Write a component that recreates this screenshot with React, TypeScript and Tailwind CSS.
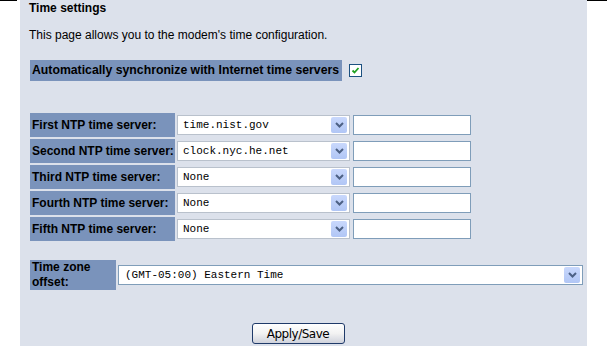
import React from 'react'

const servers = [
  { label: 'First NTP time server:', value: 'time.nist.gov' },
  { label: 'Second NTP time server:', value: 'clock.nyc.he.net' },
  { label: 'Third NTP time server:', value: 'None' },
  { label: 'Fourth NTP time server:', value: 'None' },
  { label: 'Fifth NTP time server:', value: 'None' },
]

const DropButton = () => (
  <div className="w-[16px] h-[16px] rounded-[2px] bg-gradient-to-b from-[#c9d8fc] to-[#b1c6f5] flex items-center justify-center">
    <svg width="9" height="6" viewBox="0 0 9 6">
      <path d="M1 1 L4.5 4.5 L8 1" fill="none" stroke="#4d6185" strokeWidth="2" />
    </svg>
  </div>
)

const FakeSelect = ({ value, className }: { value: string; className: string }) => (
  <div
    className={`h-[20px] bg-white flex items-center justify-between pl-[5px] pr-[2px] ${className}`}
  >
    <span className="text-[11px] text-black font-['Liberation_Mono',monospace] leading-none">
      {value}
    </span>
    <DropButton />
  </div>
)

export default function App() {
  return (
    <div className="w-[607px] h-[346px] bg-white flex font-['Liberation_Sans',Arial,sans-serif] text-black overflow-hidden">
      <div className="w-[20px] shrink-0">
        <div className="h-[1px] w-[17px] bg-black" />
      </div>

      <div className="w-[567px] shrink-0 bg-[#dce1eb] pl-[9px] pt-[1px] flex flex-col">
        <div className="text-[12px] font-bold leading-[14px]">Time settings</div>
        <div className="text-[12px] leading-[14px] mt-[13px]">
          This page allows you to the modem's time configuration.
        </div>

        <div className="flex items-center mt-[18px] pl-[1px]">
          <div className="h-[21px] w-[312px] bg-[#7a93bb] flex items-center pl-[2px] text-[12.25px] font-bold">
            Automatically synchronize with Internet time servers
          </div>
          <div className="ml-[7px] w-[13px] h-[13px] border border-[#1c5180] bg-white flex items-center justify-center">
            <svg width="9" height="9" viewBox="0 0 9 9">
              <path d="M1.5 4.5 L3.5 6.5 L7.5 2" fill="none" stroke="#21a121" strokeWidth="1.8" />
            </svg>
          </div>
        </div>

        <div className="flex flex-col gap-[2px] mt-[32px] pl-[1px]">
          {servers.map((s, i) => (
            <div key={i} className="flex items-center h-[24px]">
              <div className="w-[145px] h-full bg-[#7a93bb] flex items-center pl-[2px] text-[12px] font-bold whitespace-nowrap">
                {s.label}
              </div>
              <FakeSelect
                value={s.value}
                className="ml-[2px] w-[173px] border border-[#b9c1cc]"
              />
              <div className="ml-[3px] w-[118px] h-[20px] bg-white border border-[#7f9db9]" />
            </div>
          ))}
        </div>

        <div className="flex items-center mt-[19px] pl-[1px]">
          <div className="w-[86px] h-[30px] bg-[#7a93bb] pl-[2px] text-[12px] font-bold leading-[15px]">
            Time zone
            <br />
            offset:
          </div>
          <FakeSelect
            value="(GMT-05:00) Eastern Time"
            className="ml-[2px] w-[465px] border border-[#7f9db9] !pl-[6px]"
          />
        </div>

        <div className="flex justify-center mt-[33px] pr-[20px]">
          <button className="w-[93px] h-[21px] rounded-[3px] border border-[#1f3a69] bg-gradient-to-b from-white via-[#f2f2f2] to-[#cfd2dc] text-[12px] text-black font-['DejaVu_Sans',sans-serif] tracking-[-0.5px] flex items-center justify-center">
            Apply/Save
          </button>
        </div>
      </div>

      <div className="w-[20px] shrink-0">
        <div className="h-[1px] w-full bg-black" />
      </div>
    </div>
  )
}
